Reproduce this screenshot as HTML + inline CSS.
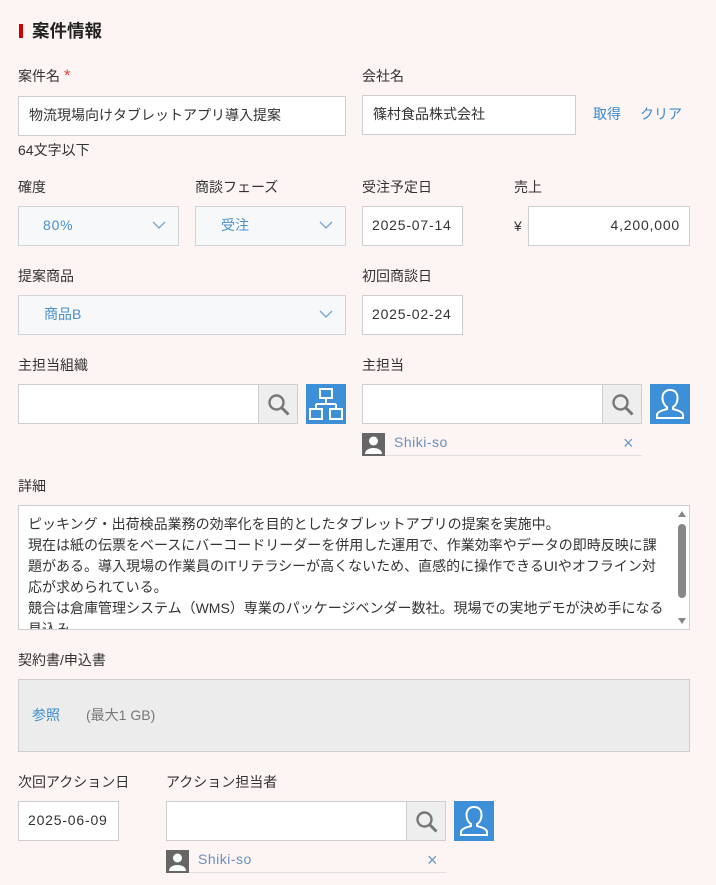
<!DOCTYPE html>
<html><head><meta charset="utf-8"><style>
*{box-sizing:border-box;margin:0;padding:0}
body{width:716px;height:885px;background:#fdf4f4;font-family:"Liberation Sans","Noto Sans CJK JP",sans-serif;font-size:14px;color:#333;position:relative;overflow:hidden}
.a{position:absolute;white-space:nowrap}
.lbl{position:absolute;font-size:14px;color:#333;line-height:20px;white-space:nowrap}
.in{position:absolute;background:#fff;border:1px solid #cfcfcf;font-size:14px;line-height:37px;padding-left:10px;color:#333;white-space:nowrap;overflow:hidden}
.num{letter-spacing:0.8px}
.sel{position:absolute;background:#f6f8fa;border:1px solid #d0d4d8;font-size:14px;line-height:37px;color:#4a8fc9}
.sel svg{position:absolute;right:12px;top:14px}
.sb{position:absolute;background:#eee;border:1px solid #cfcfcf;width:40px;height:40px}
.sb svg{position:absolute;left:8px;top:8px}
.bb{position:absolute;background:#3d8fd8;width:40px;height:40px}
.bb svg{position:absolute;left:0;top:0}
.blue{color:#3a8bd0}
.chip{position:absolute;height:23px;border-bottom:1px solid #e0e0e0}
.av{position:absolute;left:0;top:0;width:23px;height:23px;background:#666}
</style></head><body>
<div class="a" style="left:19px;top:24px;width:4px;height:14px;background:#c00"></div>
<div class="a" style="left:32px;top:19px;font-size:17.5px;font-weight:bold;color:#222;line-height:24px">案件情報</div>

<div class="lbl" style="left:18px;top:66px">案件名 <span style="color:#e0453a;font-size:17px">*</span></div>
<div class="in" style="left:18px;top:96px;width:328px;height:40px">物流現場向けタブレットアプリ導入提案</div>
<div class="lbl" style="left:18px;top:140px">64文字以下</div>

<div class="lbl" style="left:362px;top:66px">会社名</div>
<div class="in" style="left:362px;top:95px;width:214px;height:40px">篠村食品株式会社</div>
<div class="lbl blue" style="left:593px;top:104px">取得</div>
<div class="lbl blue" style="left:640px;top:104px">クリア</div>

<div class="lbl" style="left:18px;top:177px">確度</div>
<div class="sel num" style="left:18px;top:206px;width:161px;height:40px;padding-left:24px">80%<svg width="14" height="9" viewBox="0 0 14 9"><path d="M1 1l6 6 6-6" fill="none" stroke="#6fa3d3" stroke-width="1.3"/></svg></div>
<div class="lbl" style="left:195px;top:177px">商談フェーズ</div>
<div class="sel" style="left:195px;top:206px;width:151px;height:40px;padding-left:25px">受注<svg width="14" height="9" viewBox="0 0 14 9"><path d="M1 1l6 6 6-6" fill="none" stroke="#6fa3d3" stroke-width="1.3"/></svg></div>
<div class="lbl" style="left:362px;top:177px">受注予定日</div>
<div class="in num" style="left:362px;top:206px;width:101px;height:40px;padding-left:9px">2025-07-14</div>
<div class="lbl" style="left:514px;top:177px">売上</div>
<div class="lbl" style="left:514px;top:216px">¥</div>
<div class="in num" style="left:528px;top:206px;width:162px;height:40px;text-align:right;padding-right:9px">4,200,000</div>

<div class="lbl" style="left:18px;top:266px">提案商品</div>
<div class="sel" style="left:18px;top:295px;width:328px;height:40px;padding-left:25px">商品B<svg width="14" height="9" viewBox="0 0 14 9"><path d="M1 1l6 6 6-6" fill="none" stroke="#6fa3d3" stroke-width="1.3"/></svg></div>
<div class="lbl" style="left:362px;top:266px">初回商談日</div>
<div class="in num" style="left:362px;top:295px;width:101px;height:40px;padding-left:9px">2025-02-24</div>

<div class="lbl" style="left:18px;top:355px">主担当組織</div>
<div class="in" style="left:18px;top:384px;width:241px;height:40px"></div>
<div class="sb" style="left:258px;top:384px"><svg width="24" height="24" viewBox="0 0 24 24"><circle cx="9.5" cy="9.5" r="7" fill="none" stroke="#777" stroke-width="2.4"/><path d="M14.5 14.5l7 7" stroke="#777" stroke-width="3"/></svg></div>
<div class="bb" style="left:306px;top:384px"><svg width="40" height="40" viewBox="0 0 40 40" fill="none" stroke="#fff" stroke-width="2"><rect x="14" y="5" width="12" height="9"/><path d="M20 14v6M10 20h20M10 20v5M30 20v5"/><rect x="4" y="25" width="12" height="10"/><rect x="24" y="25" width="12" height="10"/></svg></div>

<div class="lbl" style="left:362px;top:355px">主担当</div>
<div class="in" style="left:362px;top:384px;width:241px;height:40px"></div>
<div class="sb" style="left:602px;top:384px"><svg width="24" height="24" viewBox="0 0 24 24"><circle cx="9.5" cy="9.5" r="7" fill="none" stroke="#777" stroke-width="2.4"/><path d="M14.5 14.5l7 7" stroke="#777" stroke-width="3"/></svg></div>
<div class="bb" style="left:650px;top:384px"><svg width="40" height="40" viewBox="0 0 40 40" fill="none" stroke="#fff" stroke-width="2"><path d="M20 6c-5 0-7.5 3.5-7.5 8s2.5 8 4.5 9v2c-4 1-10 3-10 6v3h26v-3c0-3-6-5-10-6v-2c2-1 4.5-4 4.5-9s-2.5-8-7.5-8z"/></svg></div>
<div class="chip" style="left:362px;top:433px;width:280px"><div class="av"><svg width="23" height="23" viewBox="0 0 23 23"><circle cx="11.5" cy="8" r="4.5" fill="#fff"/><path d="M3 21c0-4 4-6 8.5-6s8.5 2 8.5 6z" fill="#fff"/></svg></div><div class="a" style="left:32px;top:1px;color:#6a8fbf;font-size:14px;letter-spacing:0.5px">Shiki-so</div><div class="a" style="left:261px;top:0px;color:#6a9bd0;font-size:18px;line-height:20px">×</div></div>

<div class="lbl" style="left:18px;top:476px">詳細</div>
<div class="in" style="left:18px;top:505px;width:672px;height:125px;line-height:21px;padding:8px 0 0 9px;font-size:14px">ピッキング・出荷検品業務の効率化を目的としたタブレットアプリの提案を実施中。<br>現在は紙の伝票をベースにバーコードリーダーを併用した運用で、作業効率やデータの即時反映に課<br>題がある。導入現場の作業員のITリテラシーが高くないため、直感的に操作できるUIやオフライン対<br>応が求められている。<br>競合は倉庫管理システム（WMS）専業のパッケージベンダー数社。現場での実地デモが決め手になる<br>見込み。</div>
<div class="a" style="left:676px;top:506px;width:13px;height:123px;background:#fff"></div>
<div class="a" style="left:678px;top:511px;width:0;height:0;border-left:4px solid transparent;border-right:4px solid transparent;border-bottom:6px solid #888"></div>
<div class="a" style="left:678px;top:524px;width:8px;height:74px;background:#888;border-radius:4px"></div>
<div class="a" style="left:678px;top:618px;width:0;height:0;border-left:4px solid transparent;border-right:4px solid transparent;border-top:6px solid #888"></div>

<div class="lbl" style="left:18px;top:650px">契約書/申込書</div>
<div class="a" style="left:18px;top:679px;width:672px;height:73px;background:#ececec;border:1px solid #cfcfcf"></div>
<div class="lbl blue" style="left:32px;top:705px">参照</div>
<div class="lbl" style="left:86px;top:705px;color:#777">(最大1 GB)</div>

<div class="lbl" style="left:18px;top:772px">次回アクション日</div>
<div class="in num" style="left:18px;top:801px;width:101px;height:40px;padding-left:9px">2025-06-09</div>
<div class="lbl" style="left:166px;top:772px">アクション担当者</div>
<div class="in" style="left:166px;top:801px;width:241px;height:40px"></div>
<div class="sb" style="left:406px;top:801px"><svg width="24" height="24" viewBox="0 0 24 24"><circle cx="9.5" cy="9.5" r="7" fill="none" stroke="#777" stroke-width="2.4"/><path d="M14.5 14.5l7 7" stroke="#777" stroke-width="3"/></svg></div>
<div class="bb" style="left:454px;top:801px"><svg width="40" height="40" viewBox="0 0 40 40" fill="none" stroke="#fff" stroke-width="2"><path d="M20 6c-5 0-7.5 3.5-7.5 8s2.5 8 4.5 9v2c-4 1-10 3-10 6v3h26v-3c0-3-6-5-10-6v-2c2-1 4.5-4 4.5-9s-2.5-8-7.5-8z"/></svg></div>
<div class="chip" style="left:166px;top:850px;width:280px"><div class="av"><svg width="23" height="23" viewBox="0 0 23 23"><circle cx="11.5" cy="8" r="4.5" fill="#fff"/><path d="M3 21c0-4 4-6 8.5-6s8.5 2 8.5 6z" fill="#fff"/></svg></div><div class="a" style="left:32px;top:1px;color:#6a8fbf;font-size:14px;letter-spacing:0.5px">Shiki-so</div><div class="a" style="left:261px;top:0px;color:#6a9bd0;font-size:18px;line-height:20px">×</div></div>
</body></html>
